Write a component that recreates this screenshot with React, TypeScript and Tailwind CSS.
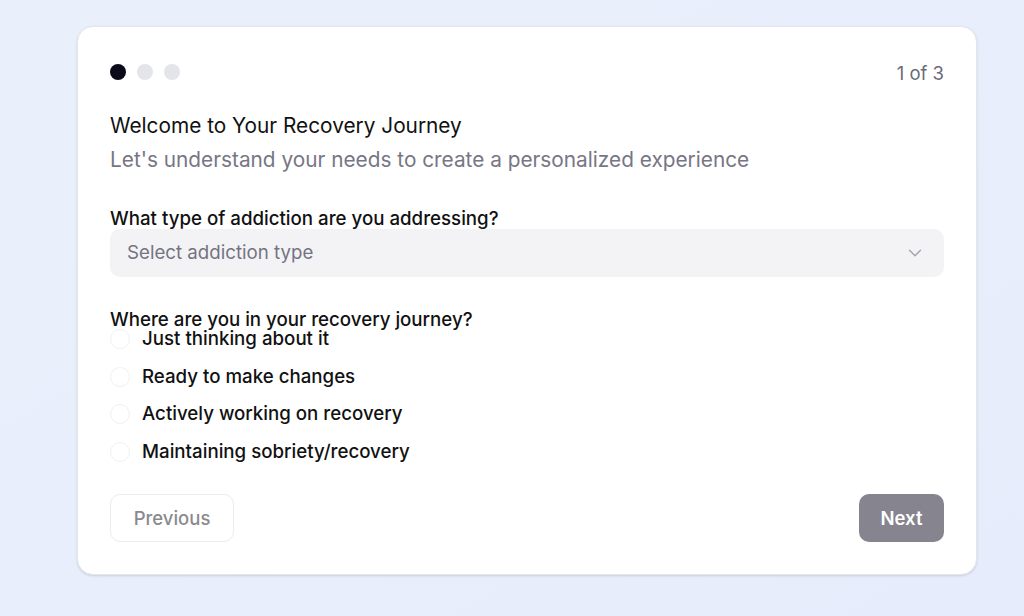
import { ChevronDown } from "lucide-react";

const stages = [
  "Just thinking about it",
  "Ready to make changes",
  "Actively working on recovery",
  "Maintaining sobriety/recovery",
];

export default function App() {
  return (
    <div
      className="min-h-[616px] w-full bg-gradient-to-br from-[#eaf0fb] to-[#e6ecfb] pt-[26px] pl-[77px]"
      style={{ fontFamily: "Inter, 'Noto Sans', sans-serif" }}
    >
      <div className="w-[900px] h-[549px] bg-white rounded-[16px] border border-[#e4e6ec] shadow-sm px-8 pt-[36px] flex flex-col">
        {/* progress */}
        <div className="flex items-center justify-between h-[18px]">
          <div className="flex items-center gap-[11px]">
            <span className="w-4 h-4 rounded-full bg-[#0a0a1a]" />
            <span className="w-4 h-4 rounded-full bg-[#e4e5ea]" />
            <span className="w-4 h-4 rounded-full bg-[#e4e5ea]" />
          </div>
          <span className="pt-[2px] text-[18.5px] leading-[18px] text-[#6b6b78]">1 of 3</span>
        </div>

        <h2 className="mt-[32px] text-[20.8px] leading-[26px] text-[#111]">
          Welcome to Your Recovery Journey
        </h2>
        <p className="mt-[8px] text-[20.8px] leading-[26px] text-[#777685]">
          Let's understand your needs to create a personalized experience
        </p>

        <label className="mt-[35px] text-[18.7px] leading-[22px] font-medium text-[#111]">
          What type of addiction are you addressing?
        </label>
        <button className="-mt-px h-12 w-full rounded-[10px] bg-[#f3f3f5] pl-[17px] pr-[18px] flex items-center justify-between text-left">
          <span className="pt-px text-[18.7px] text-[#747382]">Select addiction type</span>
          <ChevronDown className="w-[22px] h-[22px] text-[#a3a3ad]" strokeWidth={1.5} />
        </button>

        <div className="mt-[34px] text-[18.7px] leading-[18px] font-medium text-[#111]">
          Where are you in your recovery journey?
        </div>
        <div className="flex flex-col gap-[17.5px]">
          {stages.map((s) => (
            <label key={s} className="flex items-center gap-3 h-[20px]">
              <span className="w-5 h-5 rounded-full border border-[#f0f0f3] bg-white shrink-0" />
              <span className="text-[18.7px] leading-[20px] font-medium text-[#111]">{s}</span>
            </label>
          ))}
        </div>

        <div className="mt-auto mb-8 flex items-center justify-between">
          <button className="h-12 w-[124px] pt-px rounded-[10px] border border-[#ececef] text-[18.5px] font-medium text-[#8a8a8e]">
            Previous
          </button>
          <button className="h-12 w-[85px] pt-px rounded-[10px] bg-[#86858f] text-[18.5px] font-semibold text-white">
            Next
          </button>
        </div>
      </div>
    </div>
  );
}
